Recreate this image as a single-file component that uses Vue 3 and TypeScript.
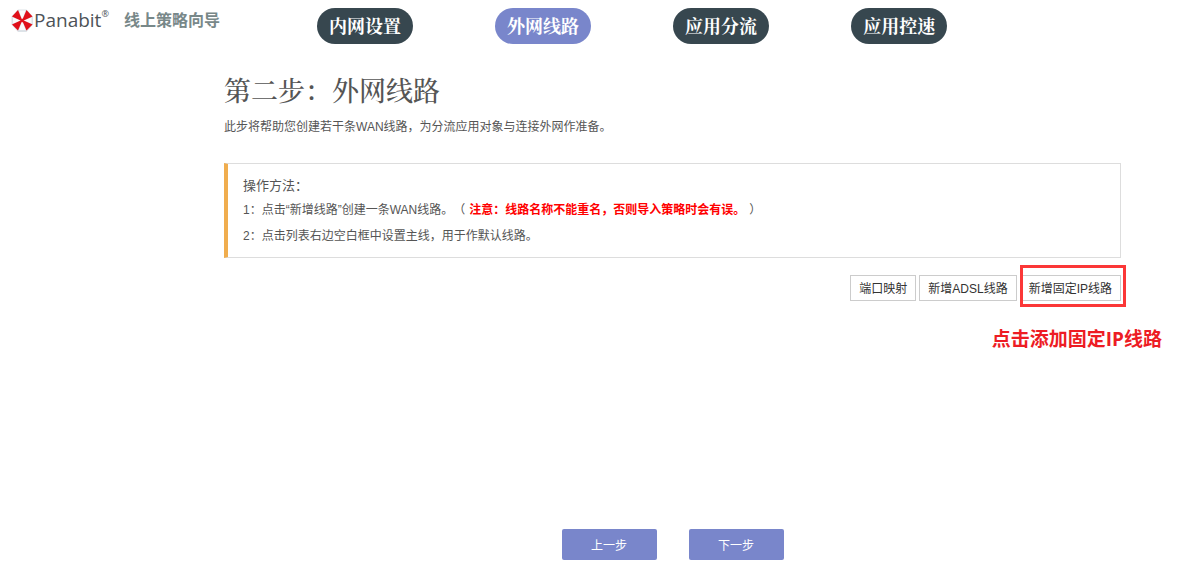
<script setup lang="ts">
import { ref } from 'vue'

interface Step {
  id: string
  label: string
}

const steps: Step[] = [
  { id: 'lan', label: '内网设置' },
  { id: 'wan', label: '外网线路' },
  { id: 'route', label: '应用分流' },
  { id: 'limit', label: '应用控速' },
]
const current = ref('wan')
</script>

<template>
  <div class="page">
    <header class="header">
      <div class="brand">
        <svg class="logo" viewBox="0 0 24 24" aria-hidden="true">
          <path d="M8 1.500H16.500L23 8.500V16.500L16.500 24H8L1.500 16.500V8.500Z" fill="#dde3e8" />
          <path d="M12.200 12.500L9 2.500H15.500ZM12.200 12.500L9 22H15.500ZM12.200 12.500L3 9.500V15.500ZM12.200 12.500L21.500 9.500V15.500Z" fill="#fafbfb" />
          <g fill="#e0101a">
            <path d="M12 11.800L8 2L2 8.500L10.500 12.500Z" />
            <path d="M12.400 11.800L16.500 2L22.500 8.500L13.800 12.500Z" />
            <path d="M12 13L8 22.500L2 16.500L10.500 12.500Z" />
            <path d="M12.400 13L16.500 22.500L22.500 16.500L13.800 12.500Z" />
            <path d="M10.500 12L12.200 10.500L13.800 12L13.800 13L12.200 14.500L10.500 13Z" />
          </g>
        </svg>
        <span class="name">Panabit<sup class="mark">®</sup></span>
        <span class="tagline">线上策略向导</span>
      </div>
      <nav class="steps">
        <button
          v-for="step in steps"
          :key="step.id"
          type="button"
          class="step"
          :class="{ active: step.id === current }"
          @click="current = step.id"
        >{{ step.label }}</button>
      </nav>
    </header>

    <main class="content">
      <h1 class="title">第二步：外网线路</h1>
      <p class="intro">此步将帮助您创建若干条WAN线路，为分流应用对象与连接外网作准备。</p>

      <section class="tips">
        <h2 class="tips-title">操作方法：</h2>
        <p class="tip">1：点击“新增线路”创建一条WAN线路。（<strong class="warn">注意：线路名称不能重名，否则导入策略时会有误。</strong>）</p>
        <p class="tip">2：点击列表右边空白框中设置主线，用于作默认线路。</p>
      </section>

      <div class="toolbar">
        <button type="button" class="tool">端口映射</button>
        <button type="button" class="tool">新增ADSL线路</button>
        <div class="marked">
          <button type="button" class="tool">新增固定IP线路</button>
          <span class="frame"></span>
          <span class="note">点击添加固定IP线路</span>
        </div>
      </div>

      <div class="lines"></div>

      <div class="pager">
        <button type="button" class="page-btn">上一步</button>
        <button type="button" class="page-btn">下一步</button>
      </div>
    </main>
  </div>
</template>

<style>
body {
  margin: 0;
  background: #fff;
}
</style>

<style scoped>
.page {
  font-family: "Liberation Sans", "Noto Sans CJK SC", sans-serif;
  font-size: 12px;
  color: #555;
  text-spacing-trim: space-all;
}
button {
  font-family: inherit;
  margin: 0;
  cursor: pointer;
}
.header {
  display: flex;
  padding-top: 8px;
}
.brand {
  flex: none;
  box-sizing: border-box;
  width: 317px;
  padding-left: 10px;
  display: flex;
  align-items: flex-start;
}
.logo {
  width: 24px;
  height: 24px;
}
.name {
  font-family: "Open Sans", sans-serif;
  font-size: 19px;
  line-height: 24px;
  color: #4d5257;
}
.mark {
  font-size: 9px;
  line-height: 0;
  vertical-align: 10px;
}
.tagline {
  margin-left: 15px;
  font-size: 16px;
  line-height: 26px;
  font-weight: 700;
  color: #788889;
}
.steps {
  flex: 1;
  display: grid;
  grid-template-columns: repeat(4, 15vw);
}
.step {
  justify-self: start;
  height: 36px;
  padding: 0 12px 2px;
  border: 0;
  border-radius: 18px;
  background: #37474f;
  color: #fff;
  font-family: "Noto Serif CJK SC", "Noto Sans CJK SC", serif;
  font-size: 18px;
  line-height: 34px;
  font-weight: 700;
}
.step.active {
  background: #7986cb;
}
.content {
  margin: 29px 66px 0 224px;
}
.title {
  margin: 0;
  font-family: "Noto Serif CJK SC", "Noto Sans CJK SC", serif;
  font-size: 27px;
  line-height: 34px;
  font-weight: 500;
  color: #555;
}
.intro {
  margin: 10px 0 0;
  line-height: 20px;
}
.tips {
  margin-top: 26px;
  padding: 9px 15px 8px;
  border: 1px solid #ddd;
  border-left: 4px solid #f0ad4e;
}
.tips-title {
  margin: 0;
  font-size: 13px;
  line-height: 25px;
  font-weight: 400;
}
.tip {
  margin: 0;
  line-height: 25px;
}
.tip + .tip {
  margin-top: 1px;
}
.warn {
  margin: 0 4px;
  color: #f00;
}
.toolbar {
  display: flex;
  justify-content: flex-end;
  gap: 3px;
  margin-top: 17px;
}
.tool {
  height: 26px;
  padding: 0 8px 2px;
  border: 1px solid #ccc;
  background: #fff;
  color: #333;
  font-size: 12px;
}
.marked {
  position: relative;
}
.frame {
  position: absolute;
  inset: -10px -5px -6px 0;
  border: 3px solid #fb3737;
  pointer-events: none;
}
.note {
  position: absolute;
  top: 50px;
  right: -41px;
  font-family: "Open Sans", "Noto Sans CJK SC", sans-serif;
  font-size: 19px;
  line-height: 28px;
  font-weight: 700;
  color: #ed1c24;
  white-space: nowrap;
}
.lines {
  min-height: 228px;
}
.pager {
  display: flex;
  justify-content: center;
  gap: 32px;
}
.page-btn {
  width: 95px;
  height: 31px;
  padding: 0;
  border: 0;
  border-radius: 2px;
  background: #7986cb;
  color: #fff;
  font-size: 12px;
}
</style>
